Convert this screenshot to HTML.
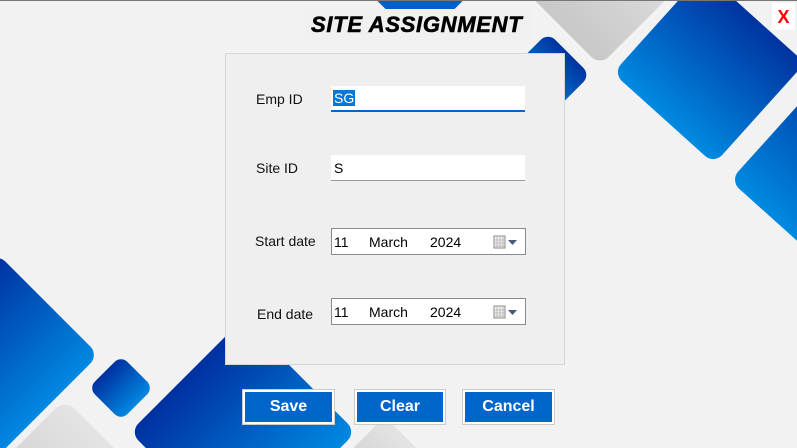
<!DOCTYPE html>
<html style="overflow:hidden"><head><style>
*{margin:0;padding:0;box-sizing:border-box}
html,body{width:797px;height:448px;overflow:hidden}
body{position:relative;background:#f2f2f2;font-family:"Liberation Sans",sans-serif}
svg.bg{position:absolute;left:0;top:0}
.panel{position:absolute;left:225px;top:53px;width:340px;height:312px;background:#efefef;border:1px solid #d6d6d6}
.lbl{position:absolute;font-size:14px;color:#111}
.tb{position:absolute;background:#fff;font-size:14px;color:#000}
.dp{position:absolute;left:331px;width:195px;height:27px;background:#fff;border:1px solid #8a8a8a;font-size:14px}
.dp span{position:absolute;top:5px}
.btn{position:absolute;top:390px;height:34px;background:#0066cc;border:2px solid #fff;box-shadow:0 0 0 1px #ccc;color:#fff;font-weight:bold;font-size:16px;text-align:center;line-height:30px}
</style></head><body>
<svg class="bg" width="797" height="448">
<defs>
<linearGradient id="g" x1="0" y1="0" x2="0" y2="1"><stop offset="0" stop-color="#0033a0"/><stop offset="1" stop-color="#008ae0"/></linearGradient>
<linearGradient id="h" x1="0" y1="0" x2="1" y2="0"><stop offset="0" stop-color="#0030a0"/><stop offset="1" stop-color="#0088e0"/></linearGradient>
<linearGradient id="gr" x1="0" y1="0" x2="0" y2="1"><stop offset="0" stop-color="#e4e4e4"/><stop offset="1" stop-color="#c8c8c8"/></linearGradient>
</defs>
<g transform="translate(600,-42) rotate(45)"><rect x="-76" y="-76" width="152" height="152" rx="12" fill="url(#gr)"/></g>
<g transform="translate(420,-30) rotate(45)"><rect x="-52" y="-52" width="104" height="104" rx="12" fill="#0060c8"/></g>
<g transform="translate(709,68) rotate(42)"><rect x="-68" y="-68" width="136" height="136" rx="12" fill="url(#g)"/></g>
<g transform="translate(836,175) rotate(42)"><rect x="-75" y="-75" width="150" height="150" rx="12" fill="url(#g)"/></g>
<g transform="translate(548,75) rotate(45)"><rect x="-30" y="-30" width="60" height="60" rx="10" fill="url(#g)"/></g>
<g transform="translate(65,505) rotate(45)"><rect x="-75" y="-75" width="150" height="150" rx="14" fill="url(#gr)"/></g>
<g transform="translate(-3,355) rotate(45)"><rect x="-72" y="-72" width="144" height="144" rx="12" fill="url(#h)"/></g>
<g transform="translate(121,388) rotate(45)"><rect x="-23" y="-23" width="46" height="46" rx="9" fill="url(#h)"/></g>
<g transform="translate(243,432) rotate(45)"><rect x="-80" y="-80" width="160" height="160" rx="12" fill="url(#h)"/></g>
<g transform="translate(385,480) rotate(45)"><rect x="-45" y="-45" width="90" height="90" rx="12" fill="url(#gr)"/></g>
<rect x="0" y="0" width="797" height="1" fill="#777"/>
</svg>
<div style="position:absolute;left:305px;top:9px;width:226px;height:31px;background:#f0f0f0"></div>
<div style="position:absolute;left:311px;top:12px;font-size:22px;font-weight:bold;font-style:italic;color:#000;letter-spacing:0.7px;-webkit-text-stroke:0.6px #000">SITE ASSIGNMENT</div>
<div style="position:absolute;left:772px;top:3px;width:23px;height:27px;background:#fff;color:#f00;font-weight:bold;font-size:18px;text-align:center;line-height:28px">X</div>
<div class="panel"></div>
<div class="lbl" style="left:256px;top:91px">Emp ID</div>
<div class="tb" style="left:331px;top:86px;width:194px;height:26px;border-bottom:2px solid #0066cc"><span style="position:absolute;left:2px;top:4px;background:#0078d7;color:#fff;padding:0 1px">SG</span></div>
<div class="lbl" style="left:256px;top:160px">Site ID</div>
<div class="tb" style="left:331px;top:155px;width:194px;height:26px;border-bottom:1px solid #999"><span style="position:absolute;left:3px;top:5px">S</span></div>
<div class="lbl" style="left:255px;top:233px">Start date</div>
<div class="dp" style="top:228px"><span style="left:2px">11</span><span style="left:37px">March</span><span style="left:98px">2024</span>
<svg style="position:absolute;left:161px;top:6px" width="30" height="15"><rect x="1" y="1" width="11" height="12" fill="#f4f4f4" stroke="#888"/><path d="M4 2v11M7 2v11M10 2v11M1 5h11M1 8h11M1 11h11" stroke="#bbb" stroke-width="1"/><path d="M15 5h9l-4.5 5z" fill="#4a5a78"/></svg></div>
<div class="lbl" style="left:257px;top:306px">End date</div>
<div class="dp" style="top:298px"><span style="left:2px">11</span><span style="left:37px">March</span><span style="left:98px">2024</span>
<svg style="position:absolute;left:161px;top:6px" width="30" height="15"><rect x="1" y="1" width="11" height="12" fill="#f4f4f4" stroke="#888"/><path d="M4 2v11M7 2v11M10 2v11M1 5h11M1 8h11M1 11h11" stroke="#bbb" stroke-width="1"/><path d="M15 5h9l-4.5 5z" fill="#4a5a78"/></svg></div>
<div class="btn" style="left:243px;width:91px">Save</div>
<div class="btn" style="left:355px;width:90px">Clear</div>
<div class="btn" style="left:463px;width:91px">Cancel</div>
</body></html>
